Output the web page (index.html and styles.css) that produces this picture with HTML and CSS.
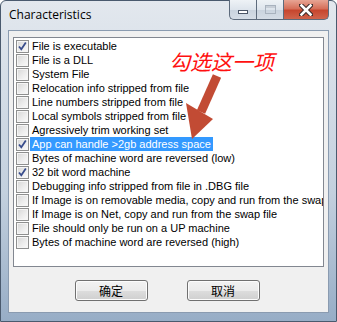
FILE: index.html
```html
<!DOCTYPE html>
<html lang="zh">
<head>
    <meta charset="UTF-8">
    <title>Characteristics</title>
    <link rel="stylesheet" href="styles.css">
</head>
<body>
    <div class="window">
        <div class="titlebar">
            <span class="title">Characteristics</span>
            <div class="caption">
                <span class="cbtn min"><i></i></span>
                <span class="cbtn max"><i></i></span>
                <span class="cbtn close">
                    <svg width="14" height="12" viewBox="0 0 14 12">
                        <path d="M2 1 L12 11 M12 1 L2 11" stroke="#3a2a28" stroke-width="4.6" stroke-linecap="square"/>
                        <path d="M2.5 1.5 L11.5 10.5 M11.5 1.5 L2.5 10.5" stroke="#fff" stroke-width="2.6" stroke-linecap="square"/>
                    </svg>
                </span>
            </div>
        </div>

        <div class="client">
            <ul class="list">
                <li class="item"><span class="box checked"></span><span class="label">File is executable</span></li>
                <li class="item"><span class="box"></span><span class="label">File is a DLL</span></li>
                <li class="item"><span class="box"></span><span class="label">System File</span></li>
                <li class="item"><span class="box"></span><span class="label">Relocation info stripped from file</span></li>
                <li class="item"><span class="box"></span><span class="label">Line numbers stripped from file</span></li>
                <li class="item"><span class="box"></span><span class="label">Local symbols stripped from file</span></li>
                <li class="item"><span class="box"></span><span class="label">Agressively trim working set</span></li>
                <li class="item selected"><span class="box checked"></span><span class="label">App can handle &gt;2gb address space</span></li>
                <li class="item"><span class="box"></span><span class="label">Bytes of machine word are reversed (low)</span></li>
                <li class="item"><span class="box checked"></span><span class="label">32 bit word machine</span></li>
                <li class="item"><span class="box"></span><span class="label">Debugging info stripped from file in .DBG file</span></li>
                <li class="item"><span class="box"></span><span class="label">If Image is on removable media, copy and run from the swap file</span></li>
                <li class="item"><span class="box"></span><span class="label">If Image is on Net, copy and run from the swap file</span></li>
                <li class="item"><span class="box"></span><span class="label">File should only be run on a UP machine</span></li>
                <li class="item"><span class="box"></span><span class="label">Bytes of machine word are reversed (high)</span></li>
            </ul>

            <div class="buttons">
                <button class="btn">确定</button>
                <button class="btn">取消</button>
            </div>
        </div>

        <!-- annotation drawn over the dialog -->
        <div class="note">勾选这一项</div>
        <svg class="arrow" width="337" height="322" viewBox="0 0 337 322">
            <line x1="217" y1="76" x2="201" y2="112" stroke="#c24b34" stroke-width="9"/>
            <polygon points="186,103 213,119 192,139" fill="#c24b34"/>
        </svg>
    </div>
</body>
</html>
```

FILE: styles.css
```css
* {
    margin: 0;
    padding: 0;
    box-sizing: border-box;
}

body {
    width: 337px;
    height: 322px;
    overflow: hidden;
    background-color: #fff;
    font-family: 'Liberation Sans', Arial, sans-serif;
}

.window {
    position: relative;
    width: 337px;
    height: 322px;
    padding: 0 7px 10px 7px;
    border: 1px solid #4a5a6e;
    border-radius: 6px 6px 0 0;
    background: linear-gradient(to bottom, #e3e8ee 0%, #d8e0e9 20%, #c3d0de 60%, #97adc6 100%);
}

.titlebar {
    display: flex;
    justify-content: space-between;
    align-items: flex-start;
    height: 29px;
}

.title {
    font-family: 'Open Sans', sans-serif;
    font-size: 12px;
    color: #000;
    line-height: 28px;
    margin-left: 1px;
}

.caption {
    display: flex;
    margin-top: -1px;
}

.cbtn {
    display: flex;
    justify-content: center;
    align-items: center;
    height: 20px;
    border: 1px solid #5d6b7c;
    border-top: none;
}

.cbtn.min {
    width: 27px;
    border-radius: 0 0 0 5px;
    border-right: none;
    background: linear-gradient(to bottom, #eef2f6 0%, #dde4ec 50%, #c9d3de 51%, #d5dde6 100%);
}

.cbtn.min i {
    width: 10px;
    height: 4px;
    margin-top: 5px;
    background-color: #fff;
    border: 1px solid #4a5566;
}

.cbtn.max {
    width: 27px;
    border-right: none;
    background: linear-gradient(to bottom, #eef2f6 0%, #dde4ec 50%, #c9d3de 51%, #d5dde6 100%);
}

.cbtn.max i {
    width: 11px;
    height: 9px;
    border: 1px solid #a8b2be;
    box-shadow: inset 0 2px 0 #c7ced7;
}

.cbtn.close {
    width: 46px;
    border-radius: 0 0 5px 0;
    background: linear-gradient(to bottom, #e7a594 0%, #d6705a 45%, #c7462e 55%, #d0644c 100%);
}

.client {
    height: 283px;
    background-color: #f0f0f0;
    border: 1px solid #8a9bb0;
}

.list {
    list-style: none;
    height: 230px;
    margin: 6px 4px 0 4px;
    padding: 1px 0 0 2px;
    background-color: #fff;
    border: 1px solid #828790;
    overflow: hidden;
}

.item {
    display: flex;
    align-items: center;
    height: 14px;
    font-size: 11px;
    color: #000;
    white-space: nowrap;
}

.box {
    flex: none;
    width: 13px;
    height: 13px;
    margin-right: 1px;
    border: 1px solid #8e8f8f;
    background: linear-gradient(135deg, #d6d6d6 0%, #eeeeee 60%, #fafafa 100%);
    box-shadow: inset 0 0 0 1px #f5f5f5;
}

.box.checked {
    background: url("data:image/svg+xml,%3Csvg xmlns='http://www.w3.org/2000/svg' width='11' height='11'%3E%3Cpath d='M2 5.5 L4.3 8.3 L8.8 1.5' fill='none' stroke='%23394d8c' stroke-width='1.8'/%3E%3C/svg%3E") center no-repeat,
        linear-gradient(135deg, #d6d6d6 0%, #eeeeee 60%, #fafafa 100%);
}

.label {
    padding: 0 2px;
    line-height: 14px;
}

.selected .label {
    background-color: #3399ff;
    color: #fff;
}

.buttons {
    display: flex;
    justify-content: center;
    gap: 39px;
    margin-top: 13px;
    padding-right: 3px;
}

.btn {
    width: 73px;
    height: 21px;
    font-family: 'Noto Sans CJK SC', sans-serif;
    font-size: 12px;
    color: #000;
    border: 1px solid #707070;
    border-radius: 3px;
    background: linear-gradient(to bottom, #f2f2f2 0%, #ebebeb 50%, #dddddd 51%, #cfcfcf 100%);
    box-shadow: inset 0 0 0 1px #fcfcfc;
}

.note {
    position: absolute;
    left: 168px;
    top: 45px;
    font-family: 'Noto Sans CJK SC', sans-serif;
    font-size: 21px;
    font-style: italic;
    color: #ff1010;
}

.arrow {
    position: absolute;
    left: -1px;
    top: -1px;
}
```
